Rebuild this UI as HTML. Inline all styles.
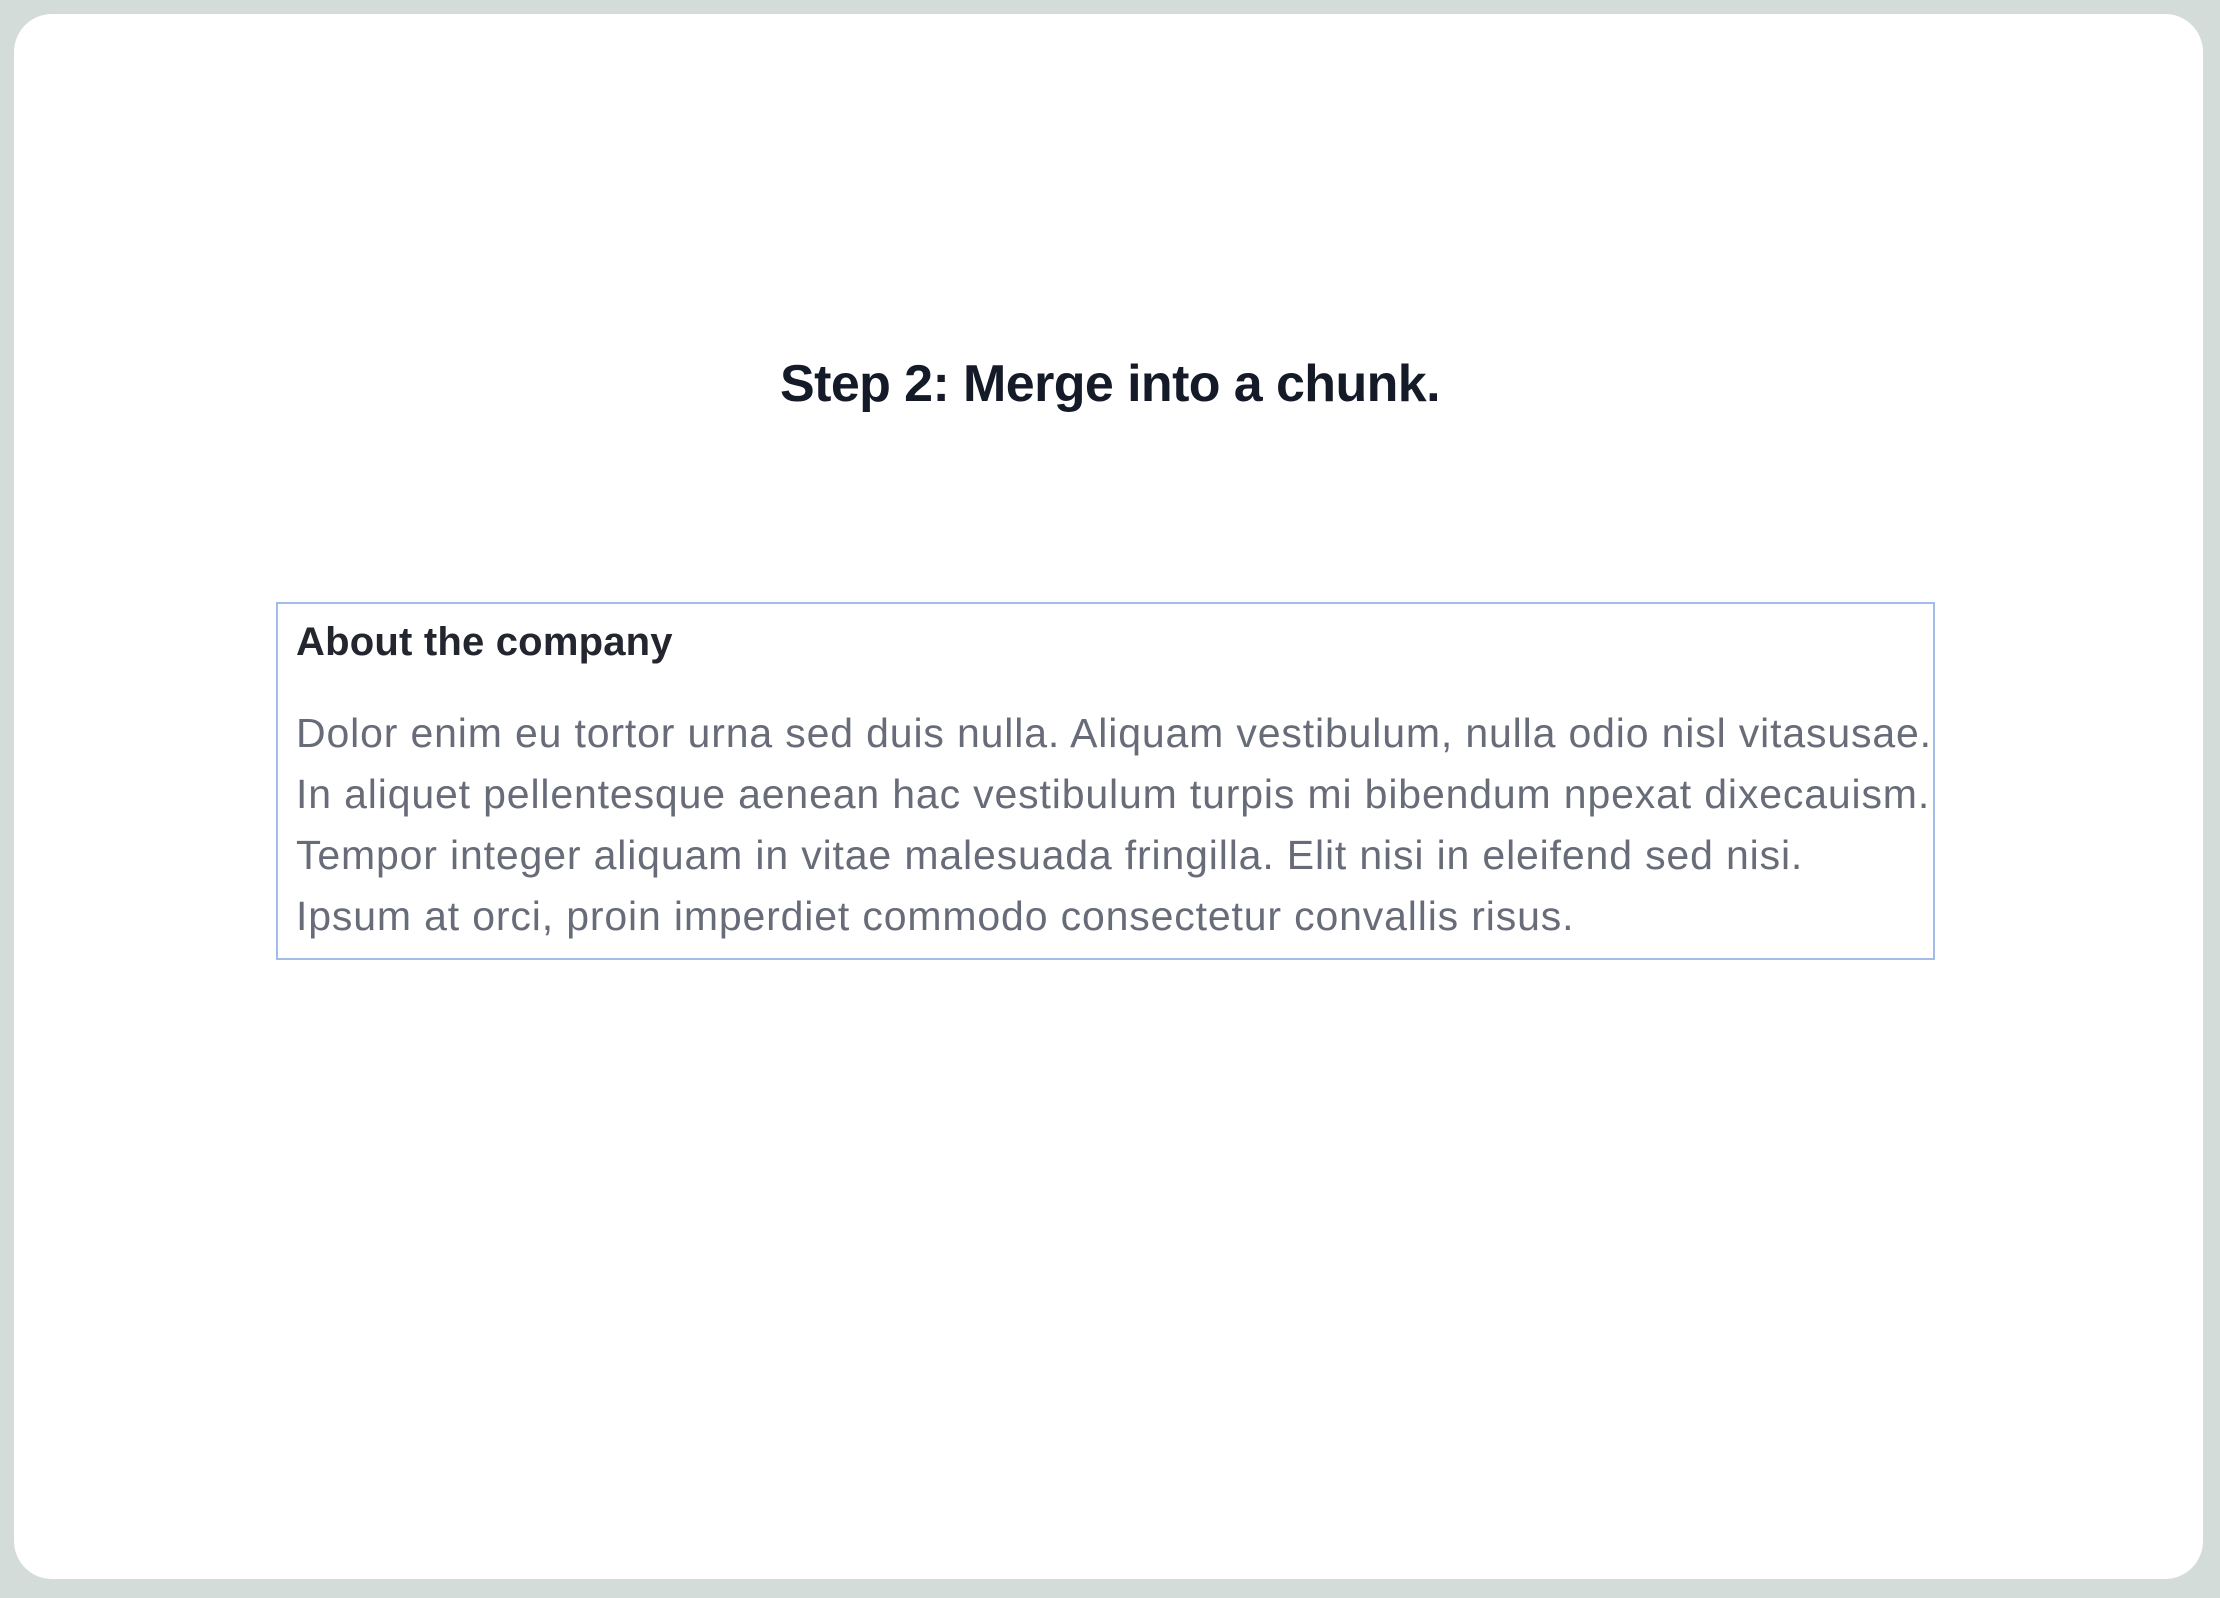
<!DOCTYPE html>
<html><head><meta charset="utf-8"><style>
html,body{margin:0;padding:0}
body{width:2220px;height:1598px;background:#d4dcd9;position:relative;overflow:hidden;font-family:"Liberation Sans",sans-serif}
.card{position:absolute;left:14px;top:14px;width:2189px;height:1565px;background:#fff;border-radius:38px}
.title{position:absolute;left:0;width:2220px;top:352px;text-align:center;font-size:52px;font-weight:bold;color:#141a28;letter-spacing:-0.6px;line-height:64px}
.box{position:absolute;left:276px;top:602px;width:1655px;height:354px;border:2px solid #a4bde8}
.h{position:absolute;left:18px;top:14px;font-size:40px;font-weight:bold;color:#23262e;line-height:48px;letter-spacing:0.2px;white-space:nowrap}
.p{position:absolute;left:18px;top:99px;font-size:41px;color:#676c78;line-height:61px;white-space:nowrap;letter-spacing:0.85px}
</style></head><body>
<div class="card"></div>
<div class="title">Step 2: Merge into a chunk.</div>
<div class="box">
<div class="h">About the company</div>
<div class="p">Dolor enim eu tortor urna sed duis nulla. Aliquam vestibulum, nulla odio nisl vitasusae.<br>In aliquet pellentesque aenean hac vestibulum turpis mi bibendum npexat dixecauism.<br>Tempor integer aliquam in vitae malesuada fringilla. Elit nisi in eleifend sed nisi.<br>Ipsum at orci, proin imperdiet commodo consectetur convallis risus.</div>
</div>
</body></html>
